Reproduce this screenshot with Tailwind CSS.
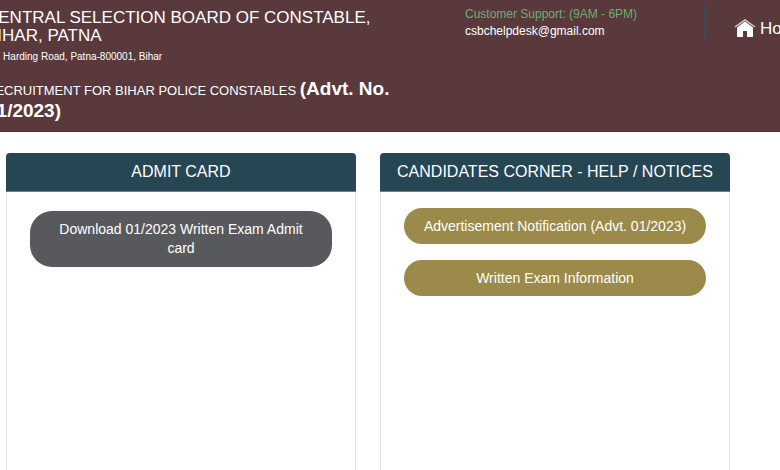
<!DOCTYPE html>
<html lang="en">
<head>
    <meta charset="UTF-8">
    <meta name="viewport" content="width=device-width, initial-scale=1.0">
    <title>Central Selection Board of Constable</title>
    <script src="https://cdn.jsdelivr.net/npm/@tailwindcss/browser@4"></script>
</head>
<body class="flex min-h-screen flex-col overflow-x-hidden bg-white font-['Liberation_Sans',Arial,sans-serif]">

    <!-- Header -->
    <header class="flex min-h-[132px] items-start overflow-hidden border-b border-[#4d3031] bg-[#59393b] text-white">
        <div class="-ml-[14px] w-[479px] shrink-0 pt-[9px] pr-16">
            <h1 class="text-[17px] leading-[18px]">CENTRAL SELECTION BOARD OF CONSTABLE, BIHAR, PATNA</h1>
            <p class="mt-[2px] pl-[6px] text-[10px] leading-5">5, Harding Road, Patna-800001, Bihar</p>
            <h2 class="mt-3 text-[13px] leading-5">RECRUITMENT FOR BIHAR POLICE CONSTABLES <b class="text-[19px]">(Advt. No. 01/2023)</b></h2>
        </div>

        <div class="min-w-0 flex-1 pt-[6px] text-[12px] leading-[17px]">
            <p class="text-[#6fae70]">Customer Support: (9AM - 6PM)</p>
            <a href="mailto:csbchelpdesk@gmail.com">csbchelpdesk@gmail.com</a>
        </div>

        <nav class="mt-1 flex h-[35px] w-[76px] shrink-0 border-l-2 border-[#354b56] pt-[14px] pl-7">
            <a href="#" class="flex h-[21px] items-center gap-1 text-[17px] whitespace-nowrap">
                <svg class="h-[19px] w-[22px] shrink-0" viewBox="0 0 22 19" fill="none" aria-hidden="true">
                    <path d="M3 8.500 11 2.500l8 6V18h-6v-6H9v6H3z" fill="#fff"/>
                    <path d="M1 8 11 1l10 7" stroke="#d8cfd0" stroke-width="1.500"/>
                </svg>
                Home
            </a>
        </nav>
    </header>

    <!-- Cards -->
    <main class="grid flex-1 grid-cols-2 gap-6 pt-[21px] pr-[50px] pl-[6px]">
        <section class="rounded-t border-x border-[#e3e3e3]">
            <h2 class="-mx-px rounded-t border-b border-[#6c8087] bg-[#264653] text-center text-[16px] leading-[38px] text-white">ADMIT CARD</h2>
            <div class="px-[23px] pt-[19px]">
                <button type="button" class="w-full rounded-[22px] bg-[#58595c] px-5 py-[9px] text-[14px] leading-[19px] text-white">Download 01/2023 Written Exam Admit card</button>
            </div>
        </section>

        <section class="rounded-t border-x border-[#e3e3e3]">
            <h2 class="-mx-px rounded-t border-b border-[#6c8087] bg-[#264653] text-center text-[16px] leading-[38px] text-white">CANDIDATES CORNER - HELP / NOTICES</h2>
            <div class="flex flex-col gap-4 px-[23px] pt-4">
                <button type="button" class="w-full rounded-full bg-[#9c8a4a] py-2 text-[14px] leading-5 text-white">Advertisement Notification (Advt. 01/2023)</button>
                <button type="button" class="w-full rounded-full bg-[#9c8a4a] py-2 text-[14px] leading-5 text-white">Written Exam Information</button>
            </div>
        </section>
    </main>

</body>
</html>
